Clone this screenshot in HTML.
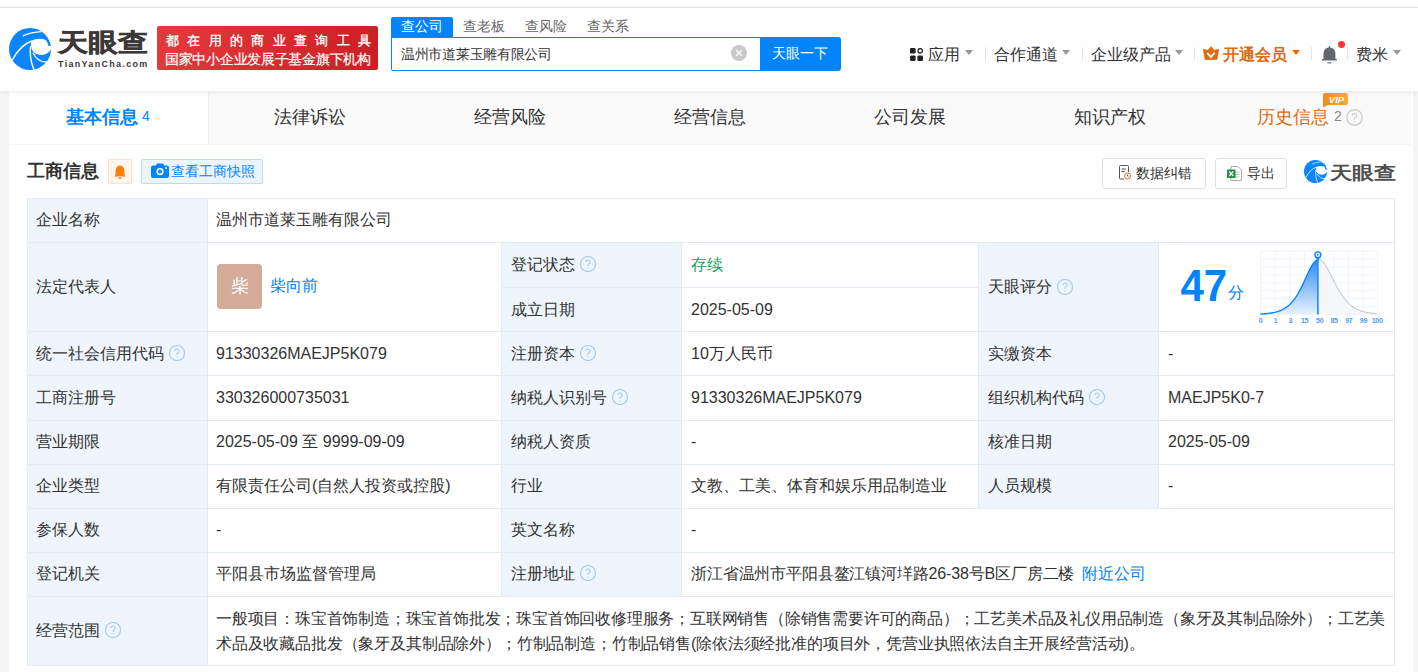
<!DOCTYPE html><html><head><meta charset="utf-8"><style>
*{margin:0;padding:0;box-sizing:border-box}
html,body{width:1418px;height:672px;overflow:hidden;background:#f5f5f5;font-family:"Liberation Sans",sans-serif;color:#333}
.a{position:absolute;white-space:nowrap}
.bx{position:absolute}
.t16{font-size:16px;line-height:20px}
.help{position:absolute;width:16px;height:16px}
</style></head><body>
<div class="bx" style="left:0;top:0;width:1418px;height:7px;background:#fff"></div>
<div class="bx" style="left:0;top:7px;width:1418px;height:1px;background:#e6e6e6"></div>
<div class="bx" style="left:9px;top:91px;width:1404px;height:581px;background:#fff"></div>
<div class="bx" style="left:9px;top:91px;width:1402px;height:53px;background:#fafafa"></div>
<div class="bx" style="left:9px;top:91px;width:199px;height:53px;background:#fff"></div>
<div class="bx" style="left:208px;top:91px;width:1px;height:53px;background:#f0f0f0"></div>
<div class="bx" style="left:9px;top:144px;width:1402px;height:1px;background:#f4f4f4"></div>
<div class="bx" style="left:0;top:8px;width:1418px;height:83px;background:#fff;box-shadow:0 1px 5px rgba(0,0,0,.09)"></div>
<div class="bx" style="left:9px;top:28px;width:42px;height:42px"><svg width="42" height="42" viewBox="0 0 42 42"><circle cx="21" cy="21" r="21" fill="#0a84ff"/><path d="M22.4 13 C26 10.5 33 10 36.5 12 C38.5 13.5 39 16 39 17.5 L43 18.5 L43 20 C40.5 24 37 27 33 27 C29 27 25.5 25.5 23.9 23.4 C22 21 21.5 16 22.4 13Z" fill="#fff"/><path d="M3 32.5 C8 23 14 16 22.8 13" fill="none" stroke="#fff" stroke-width="1.4"/><path d="M21.6 18 C20.5 27 22 35 25.5 43" fill="none" stroke="#fff" stroke-width="1.4"/><path d="M24 25 C27 31 32 34.5 38.5 34" fill="none" stroke="#fff" stroke-width="1.4"/><path d="M14 7.9 C20 5 26 3.8 32.5 3.6" fill="none" stroke="#fff" stroke-width="1.2"/></svg></div>
<div class="a" style="left:58px;top:28px;font-size:25px;line-height:28px;font-weight:bold;color:#3d3838;-webkit-text-stroke:0.4px #3d3838;transform:scaleX(1.2);transform-origin:0 0">天眼查</div>
<div class="a" style="left:58px;top:58px;font-size:9px;line-height:12px;font-weight:bold;color:#3d3838;letter-spacing:1.3px">TianYanCha.com</div>
<div class="bx" style="left:157px;top:26px;width:221px;height:44px;border-radius:2px;background:linear-gradient(100deg,#e4393d,#cc1f24)"></div>
<div class="a" style="left:166px;top:33px;font-size:13px;line-height:16px;color:#fff;-webkit-text-stroke:0.35px #fff;letter-spacing:8.35px">都在用的商业查询工具</div>
<div class="a" style="left:165px;top:51.5px;font-size:13.5px;line-height:16px;color:#fff;-webkit-text-stroke:0.2px #fff;letter-spacing:-0.28px">国家中小企业发展子基金旗下机构</div>
<div class="bx" style="left:391px;top:17px;width:62px;height:21px;background:#0084ff;border-radius:2px 2px 0 0"></div>
<div class="a" style="left:401px;top:16px;font-size:14px;line-height:20px;color:#fff">查公司</div>
<div class="a" style="left:463px;top:16px;font-size:14px;line-height:20px;color:#666">查老板</div>
<div class="a" style="left:525px;top:16px;font-size:14px;line-height:20px;color:#666">查风险</div>
<div class="a" style="left:587px;top:16px;font-size:14px;line-height:20px;color:#666">查关系</div>
<div class="bx" style="left:391px;top:37px;width:372px;height:34px;border:1px solid #0084ff;border-radius:0 0 0 2px;background:#fff"></div>
<div class="a" style="left:401px;top:45px;font-size:13.5px;line-height:20px;color:#333;letter-spacing:-0.3px">温州市道莱玉雕有限公司</div>
<div class="bx" style="left:731px;top:45px;width:16px;height:16px;border-radius:50%;background:#c9c9c9"><svg width="16" height="16" viewBox="0 0 16 16"><path d="M5 5L11 11M11 5L5 11" stroke="#fff" stroke-width="1.3"/></svg></div>
<div class="bx" style="left:760px;top:37px;width:81px;height:34px;background:#0084ff;border-radius:0 3px 3px 0"></div>
<div class="a" style="left:772px;top:43px;font-size:14px;line-height:20px;color:#fff">天眼一下</div>
<div class="bx" style="left:910px;top:47px;width:13px;height:13px"><svg width="13" height="13" viewBox="0 0 13 13"><rect x="0" y="0" width="5.6" height="5.6" rx="1.3" fill="#222"/><circle cx="10.2" cy="2.8" r="2.2" fill="none" stroke="#222" stroke-width="1.3"/><rect x="0" y="7.4" width="5.6" height="5.6" rx="1.3" fill="#222"/><rect x="7.4" y="7.4" width="5.6" height="5.6" rx="1.3" fill="#222"/></svg></div>
<div class="a" style="left:928px;top:45px;font-size:16px;line-height:20px;color:#333">应用</div>
<div class="bx" style="left:965px;top:50px;width:0;height:0;border-left:4.5px solid transparent;border-right:4.5px solid transparent;border-top:5px solid #999"></div>
<div class="bx" style="left:985px;top:47px;width:1px;height:13px;background:#dde3ea"></div>
<div class="a" style="left:994px;top:45px;font-size:16px;line-height:20px;color:#333">合作通道</div>
<div class="bx" style="left:1062px;top:50px;width:0;height:0;border-left:4.5px solid transparent;border-right:4.5px solid transparent;border-top:5px solid #999"></div>
<div class="bx" style="left:1082px;top:47px;width:1px;height:13px;background:#dde3ea"></div>
<div class="a" style="left:1091px;top:45px;font-size:16px;line-height:20px;color:#333">企业级产品</div>
<div class="bx" style="left:1175px;top:50px;width:0;height:0;border-left:4.5px solid transparent;border-right:4.5px solid transparent;border-top:5px solid #999"></div>
<div class="bx" style="left:1194px;top:47px;width:1px;height:13px;background:#dde3ea"></div>
<div class="bx" style="left:1203px;top:46px;width:16px;height:14px"><svg width="16" height="14" viewBox="0 0 16 14"><path d="M0.2 3.3 L4.9 4.2 L8 0.5 L11.3 4.2 L15.8 3.3 L14 13.7 L2.1 13.7Z" fill="#dd6b0f" stroke="#dd6b0f" stroke-width=".6" stroke-linejoin="round"/><path d="M4.3 6.9 L7.9 11.2 L11.5 6.9" fill="none" stroke="#fff" stroke-width="1.8"/></svg></div>
<div class="a" style="left:1223px;top:45px;font-size:16px;line-height:20px;color:#dd6b0f;font-weight:bold">开通会员</div>
<div class="bx" style="left:1292px;top:50px;width:0;height:0;border-left:4.5px solid transparent;border-right:4.5px solid transparent;border-top:5px solid #dd6b0f"></div>
<div class="bx" style="left:1311px;top:47px;width:1px;height:13px;background:#dde3ea"></div>
<div class="bx" style="left:1321px;top:45px;width:17px;height:20px"><svg width="17" height="20" viewBox="0 0 17 20"><rect x="7.9" y="1" width="1.1" height="2.5" fill="#62666d"/><path d="M2.5 14.2 L2.5 9 C2.5 5 5 2.6 8.45 2.6 C11.9 2.6 14.4 5 14.4 9 L14.4 14.2Z" fill="#62666d"/><rect x="0.9" y="14" width="15" height="1.6" rx=".5" fill="#62666d"/><rect x="6.2" y="17.1" width="4.5" height="1.5" rx=".5" fill="#8a8d93"/></svg></div>
<div class="bx" style="left:1338px;top:41px;width:7px;height:7px;border-radius:50%;background:#f73535"></div>
<div class="bx" style="left:1347px;top:47px;width:1px;height:13px;background:#dde3ea"></div>
<div class="a" style="left:1356px;top:45px;font-size:16px;line-height:20px;color:#333">费米</div>
<div class="bx" style="left:1393px;top:50px;width:0;height:0;border-left:4.5px solid transparent;border-right:4.5px solid transparent;border-top:5px solid #999"></div>
<div class="a" style="left:66px;top:107px;font-size:18px;line-height:20px;color:#0084ff;font-weight:bold">基本信息</div>
<div class="a" style="left:142px;top:106px;font-size:14px;line-height:20px;color:#0084ff">4</div>
<div class="a" style="left:273.5px;top:107px;font-size:18px;line-height:20px;color:#333">法律诉讼</div>
<div class="a" style="left:473.7px;top:107px;font-size:18px;line-height:20px;color:#333">经营风险</div>
<div class="a" style="left:673.9px;top:107px;font-size:18px;line-height:20px;color:#333">经营信息</div>
<div class="a" style="left:874.1px;top:107px;font-size:18px;line-height:20px;color:#333">公司发展</div>
<div class="a" style="left:1074.3px;top:107px;font-size:18px;line-height:20px;color:#333">知识产权</div>
<div class="a" style="left:1257px;top:107px;font-size:18px;line-height:20px;color:#dd6b0f">历史信息</div>
<div class="a" style="left:1334px;top:106px;font-size:14px;line-height:20px;color:#888">2</div>
<div class="bx" style="left:1346px;top:109px;width:17px;height:17px"><svg width="17" height="17" viewBox="0 0 17 17"><circle cx="8.5" cy="8.5" r="7.8" fill="none" stroke="#c8c8c8" stroke-width="1.2"/><path d="M6.3 6.5a2.2 2.2 0 1 1 3.2 2c-.7.3-1 .8-1 1.4v.7" fill="none" stroke="#c8c8c8" stroke-width="1.1"/><circle cx="8.5" cy="12.4" r=".7" fill="#c8c8c8"/></svg></div>
<div class="bx" style="left:1323px;top:93px;width:25px;height:14px"><svg width="25" height="14" viewBox="0 0 25 14"><defs><linearGradient id="vg" x1="0" x2="1"><stop offset="0" stop-color="#f08a1c"/><stop offset="1" stop-color="#ffa733"/></linearGradient></defs><path d="M2 0 H23 A2 2 0 0 1 25 2 V10 A2 2 0 0 1 23 12 H5 L0 14.5 V2 A2 2 0 0 1 2 0Z" fill="url(#vg)"/><text x="13.5" y="9.6" font-family="Liberation Sans" font-size="9.5" font-weight="bold" font-style="italic" fill="#fff" text-anchor="middle">VIP</text></svg></div>
<div class="a" style="left:27px;top:161px;font-size:18px;line-height:20px;color:#333;font-weight:bold">工商信息</div>
<div class="bx" style="left:108px;top:159px;width:24px;height:25px;background:#fff5eb;border:1px solid #ffe2c7;border-radius:2px"><svg width="22" height="23" viewBox="0 0 22 23"><path d="M11 5.5 C7.5 6 6.5 9 6.5 12 L6.5 15 L5 16.5 L17 16.5 L15.5 15 L15.5 12 C15.5 9 14.5 6 11 5.5Z" fill="#ff7d0a"/><rect x="9.5" y="17.3" width="3" height="1.5" rx=".7" fill="#ff7d0a"/></svg></div>
<div class="bx" style="left:141px;top:159px;width:122px;height:25px;background:#ebf4ff;border:1px solid #bcdaff;border-radius:2px"></div>
<div class="bx" style="left:151px;top:163px;width:18px;height:15px"><svg width="18" height="15" viewBox="0 0 18 15"><path d="M6 0.5 H12 L13.2 2.5 H16 A2 2 0 0 1 18 4.5 V13 A2 2 0 0 1 16 15 H2 A2 2 0 0 1 0 13 V4.5 A2 2 0 0 1 2 2.5 H4.8Z" fill="#0084ff"/><circle cx="9" cy="8.6" r="3.6" fill="#fff"/><circle cx="9" cy="8.6" r="2" fill="#0084ff"/><circle cx="15" cy="5" r=".9" fill="#fff"/></svg></div>
<div class="a" style="left:171px;top:161px;font-size:14px;line-height:20px;color:#0084ff">查看工商快照</div>
<div class="bx" style="left:1102px;top:158px;width:104px;height:31px;background:#fff;border:1px solid #dfdfdf;border-radius:3px"></div>
<div class="bx" style="left:1119px;top:165px;width:12px;height:15px"><svg width="12" height="15" viewBox="0 0 12 15"><path d="M9.5 7 V1.5 A1 1 0 0 0 8.5 .5 H1.5 A1 1 0 0 0 .5 1.5 V13 A1 1 0 0 0 1.5 14 H5" fill="none" stroke="#555" stroke-width="1"/><path d="M2.5 4 H7 M2.5 6.5 H5.5" stroke="#555" stroke-width="1"/><circle cx="8.5" cy="11" r="3" fill="#fff" stroke="#e07020" stroke-width="1"/><path d="M8.5 9.5 V11 L9.5 11.8" fill="none" stroke="#555" stroke-width=".9"/></svg></div>
<div class="a" style="left:1136px;top:163px;font-size:14px;line-height:20px;color:#333">数据纠错</div>
<div class="bx" style="left:1215px;top:158px;width:72px;height:31px;background:#fff;border:1px solid #dfdfdf;border-radius:3px"></div>
<div class="bx" style="left:1227px;top:166px;width:15px;height:15px"><svg width="15" height="15" viewBox="0 0 15 15"><path d="M4 .5 H11 L14.5 4 V14.5 H4Z" fill="#fff" stroke="#aaa" stroke-width="1"/><path d="M8 6 H12.5 M8 8.5 H12.5 M8 11 H12.5" stroke="#bbb" stroke-width="1"/><rect x="0" y="3.5" width="8.5" height="8.5" fill="#1d8f4a"/><path d="M2.2 5.5 L6.3 10 M6.3 5.5 L2.2 10" stroke="#fff" stroke-width="1.2"/></svg></div>
<div class="a" style="left:1247px;top:163px;font-size:14px;line-height:20px;color:#333">导出</div>
<div class="bx" style="left:1304px;top:160px;width:23px;height:23px"><svg width="23" height="23" viewBox="0 0 42 42"><circle cx="21" cy="21" r="21" fill="#0a84ff"/><path d="M22.4 13 C26 10.5 33 10 36.5 12 C38.5 13.5 39 16 39 17.5 L43 18.5 L43 20 C40.5 24 37 27 33 27 C29 27 25.5 25.5 23.9 23.4 C22 21 21.5 16 22.4 13Z" fill="#fff"/><path d="M3 32.5 C8 23 14 16 22.8 13" fill="none" stroke="#fff" stroke-width="1.4"/><path d="M21.6 18 C20.5 27 22 35 25.5 43" fill="none" stroke="#fff" stroke-width="1.4"/><path d="M24 25 C27 31 32 34.5 38.5 34" fill="none" stroke="#fff" stroke-width="1.4"/><path d="M14 7.9 C20 5 26 3.8 32.5 3.6" fill="none" stroke="#fff" stroke-width="1.2"/></svg></div>
<div class="a" style="left:1330px;top:162.5px;font-size:18px;line-height:20px;font-weight:bold;color:#505050;transform:scaleX(1.23);transform-origin:0 0">天眼查</div>
<div class="bx" style="left:27px;top:198px;width:1368px;height:468px;background:#fff;border:1px solid #e3ebf5"></div>
<div class="bx" style="left:28px;top:199px;width:179px;height:466px;background:#eff5fc"></div>
<div class="bx" style="left:502px;top:243px;width:179px;height:353px;background:#eff5fc"></div>
<div class="bx" style="left:979px;top:243px;width:179px;height:265px;background:#eff5fc"></div>
<div class="bx" style="left:28px;top:242px;width:1366px;height:1px;background:#e3ebf5"></div>
<div class="bx" style="left:28px;top:331px;width:1366px;height:1px;background:#e3ebf5"></div>
<div class="bx" style="left:28px;top:375px;width:1366px;height:1px;background:#e3ebf5"></div>
<div class="bx" style="left:28px;top:420px;width:1366px;height:1px;background:#e3ebf5"></div>
<div class="bx" style="left:28px;top:464px;width:1366px;height:1px;background:#e3ebf5"></div>
<div class="bx" style="left:28px;top:508px;width:1366px;height:1px;background:#e3ebf5"></div>
<div class="bx" style="left:28px;top:552px;width:1366px;height:1px;background:#e3ebf5"></div>
<div class="bx" style="left:28px;top:596px;width:1366px;height:1px;background:#e3ebf5"></div>
<div class="bx" style="left:501px;top:287px;width:477px;height:1px;background:#e3ebf5"></div>
<div class="bx" style="left:207px;top:199px;width:1px;height:466px;background:#e3ebf5"></div>
<div class="bx" style="left:501px;top:243px;width:1px;height:353px;background:#e3ebf5"></div>
<div class="bx" style="left:681px;top:243px;width:1px;height:353px;background:#e3ebf5"></div>
<div class="bx" style="left:978px;top:243px;width:1px;height:265px;background:#e3ebf5"></div>
<div class="bx" style="left:1158px;top:243px;width:1px;height:265px;background:#e3ebf5"></div>
<div class="a t16" style="left:36px;top:210px;">企业名称</div>
<div class="a t16" style="left:216px;top:210px;">温州市道莱玉雕有限公司</div>
<div class="a t16" style="left:36px;top:277px;">法定代表人</div>
<div class="a" style="left:217px;top:264px;width:45px;height:45px;border-radius:4px;background:#d3ab98;color:#fff;font-size:18px;line-height:45px;text-align:center">柴</div>
<div class="a t16" style="left:270px;top:276px;color:#0084ff">柴向前</div>
<div class="a t16" style="left:511px;top:255px;">登记状态</div>
<div class="help" style="left:580px;top:256px"><svg width="16" height="16" viewBox="0 0 16 16"><circle cx="8" cy="8" r="7.5" fill="none" stroke="#a3caf0" stroke-width="1.15"/><path d="M5.9 6.1a2.1 2.1 0 1 1 3 1.9c-.6.3-.9.7-.9 1.3v.6" fill="none" stroke="#a3caf0" stroke-width="1.1"/><circle cx="8" cy="11.6" r=".6" fill="#a9cdf0"/></svg></div>
<div class="a t16" style="left:691px;top:255px;color:#1aa260">存续</div>
<div class="a t16" style="left:511px;top:300px;">成立日期</div>
<div class="a t16" style="left:691px;top:300px;">2025-05-09</div>
<div class="a t16" style="left:988px;top:277px;">天眼评分</div>
<div class="help" style="left:1057px;top:279px"><svg width="16" height="16" viewBox="0 0 16 16"><circle cx="8" cy="8" r="7.5" fill="none" stroke="#a3caf0" stroke-width="1.15"/><path d="M5.9 6.1a2.1 2.1 0 1 1 3 1.9c-.6.3-.9.7-.9 1.3v.6" fill="none" stroke="#a3caf0" stroke-width="1.1"/><circle cx="8" cy="11.6" r=".6" fill="#a9cdf0"/></svg></div>
<div class="a t16" style="left:36px;top:344px;">统一社会信用代码</div>
<div class="a t16" style="left:216px;top:344px;">91330326MAEJP5K079</div>
<div class="a t16" style="left:511px;top:344px;">注册资本</div>
<div class="a t16" style="left:691px;top:344px;">10万人民币</div>
<div class="a t16" style="left:988px;top:344px;">实缴资本</div>
<div class="a t16" style="left:1168px;top:344px;">-</div>
<div class="help" style="left:168.5px;top:345px"><svg width="16" height="16" viewBox="0 0 16 16"><circle cx="8" cy="8" r="7.5" fill="none" stroke="#a3caf0" stroke-width="1.15"/><path d="M5.9 6.1a2.1 2.1 0 1 1 3 1.9c-.6.3-.9.7-.9 1.3v.6" fill="none" stroke="#a3caf0" stroke-width="1.1"/><circle cx="8" cy="11.6" r=".6" fill="#a9cdf0"/></svg></div>
<div class="help" style="left:580px;top:345px"><svg width="16" height="16" viewBox="0 0 16 16"><circle cx="8" cy="8" r="7.5" fill="none" stroke="#a3caf0" stroke-width="1.15"/><path d="M5.9 6.1a2.1 2.1 0 1 1 3 1.9c-.6.3-.9.7-.9 1.3v.6" fill="none" stroke="#a3caf0" stroke-width="1.1"/><circle cx="8" cy="11.6" r=".6" fill="#a9cdf0"/></svg></div>
<div class="a t16" style="left:36px;top:388px;">工商注册号</div>
<div class="a t16" style="left:216px;top:388px;">330326000735031</div>
<div class="a t16" style="left:511px;top:388px;">纳税人识别号</div>
<div class="a t16" style="left:691px;top:388px;">91330326MAEJP5K079</div>
<div class="a t16" style="left:988px;top:388px;">组织机构代码</div>
<div class="a t16" style="left:1168px;top:388px;">MAEJP5K0-7</div>
<div class="help" style="left:612px;top:389px"><svg width="16" height="16" viewBox="0 0 16 16"><circle cx="8" cy="8" r="7.5" fill="none" stroke="#a3caf0" stroke-width="1.15"/><path d="M5.9 6.1a2.1 2.1 0 1 1 3 1.9c-.6.3-.9.7-.9 1.3v.6" fill="none" stroke="#a3caf0" stroke-width="1.1"/><circle cx="8" cy="11.6" r=".6" fill="#a9cdf0"/></svg></div>
<div class="help" style="left:1089px;top:389px"><svg width="16" height="16" viewBox="0 0 16 16"><circle cx="8" cy="8" r="7.5" fill="none" stroke="#a3caf0" stroke-width="1.15"/><path d="M5.9 6.1a2.1 2.1 0 1 1 3 1.9c-.6.3-.9.7-.9 1.3v.6" fill="none" stroke="#a3caf0" stroke-width="1.1"/><circle cx="8" cy="11.6" r=".6" fill="#a9cdf0"/></svg></div>
<div class="a t16" style="left:36px;top:432px;">营业期限</div>
<div class="a t16" style="left:216px;top:432px;">2025-05-09 至 9999-09-09</div>
<div class="a t16" style="left:511px;top:432px;">纳税人资质</div>
<div class="a t16" style="left:691px;top:432px;">-</div>
<div class="a t16" style="left:988px;top:432px;">核准日期</div>
<div class="a t16" style="left:1168px;top:432px;">2025-05-09</div>
<div class="a t16" style="left:36px;top:476px;">企业类型</div>
<div class="a t16" style="left:216px;top:476px;">有限责任公司(自然人投资或控股)</div>
<div class="a t16" style="left:511px;top:476px;">行业</div>
<div class="a t16" style="left:691px;top:476px;">文教、工美、体育和娱乐用品制造业</div>
<div class="a t16" style="left:988px;top:476px;">人员规模</div>
<div class="a t16" style="left:1168px;top:476px;">-</div>
<div class="a t16" style="left:36px;top:520px;">参保人数</div>
<div class="a t16" style="left:216px;top:520px;">-</div>
<div class="a t16" style="left:511px;top:520px;">英文名称</div>
<div class="a t16" style="left:691px;top:520px;">-</div>
<div class="a t16" style="left:36px;top:564px;">登记机关</div>
<div class="a t16" style="left:216px;top:564px;">平阳县市场监督管理局</div>
<div class="a t16" style="left:511px;top:564px;">注册地址</div>
<div class="help" style="left:580px;top:565px"><svg width="16" height="16" viewBox="0 0 16 16"><circle cx="8" cy="8" r="7.5" fill="none" stroke="#a3caf0" stroke-width="1.15"/><path d="M5.9 6.1a2.1 2.1 0 1 1 3 1.9c-.6.3-.9.7-.9 1.3v.6" fill="none" stroke="#a3caf0" stroke-width="1.1"/><circle cx="8" cy="11.6" r=".6" fill="#a9cdf0"/></svg></div>
<div class="a t16" style="left:691px;top:564px;"><span style="letter-spacing:-0.16px">浙江省温州市平阳县鳌江镇河垟路26-38号B区厂房二楼</span></div>
<div class="a t16" style="left:1082px;top:564px;color:#0084ff">附近公司</div>
<div class="a t16" style="left:36px;top:621px;">经营范围</div>
<div class="help" style="left:105px;top:622px"><svg width="16" height="16" viewBox="0 0 16 16"><circle cx="8" cy="8" r="7.5" fill="none" stroke="#a3caf0" stroke-width="1.15"/><path d="M5.9 6.1a2.1 2.1 0 1 1 3 1.9c-.6.3-.9.7-.9 1.3v.6" fill="none" stroke="#a3caf0" stroke-width="1.1"/><circle cx="8" cy="11.6" r=".6" fill="#a9cdf0"/></svg></div>
<div class="a" style="left:216px;top:606px;font-size:16px;line-height:25px"><span style="letter-spacing:-0.2px">一般项目：珠宝首饰制造；珠宝首饰批发；珠宝首饰回收修理服务；互联网销售（除销售需要许可的商品）；工艺美术品及礼仪用品制造（象牙及其制品除外）；工艺美</span><br><span style="letter-spacing:-0.17px">术品及收藏品批发（象牙及其制品除外）；竹制品制造；竹制品销售(除依法须经批准的项目外，凭营业执照依法自主开展经营活动)。</span></div>
<div class="a" style="left:1180.5px;top:263px;font-size:42px;line-height:46px;color:#0084ff;font-weight:bold;transform:scaleY(1.07);transform-origin:0 50%">47</div>
<div class="a" style="left:1228px;top:283px;font-size:16px;line-height:20px;color:#0084ff">分</div>
<div class="bx" style="left:1255px;top:245px;width:130px;height:82px"><svg width="130" height="82" viewBox="0 0 130 82" style="position:absolute;left:0;top:0"><defs><linearGradient id="bf" x1="0" y1="0" x2="0" y2="1"><stop offset="0" stop-color="#2b8af7"/><stop offset="1" stop-color="#e9f3fe"/></linearGradient></defs><line x1="5.50" y1="6.10" x2="5.50" y2="69.60" stroke="#eef4fb" stroke-width="1"/><line x1="20.15" y1="6.10" x2="20.15" y2="69.60" stroke="#eef4fb" stroke-width="1"/><line x1="34.80" y1="6.10" x2="34.80" y2="69.60" stroke="#eef4fb" stroke-width="1"/><line x1="49.45" y1="6.10" x2="49.45" y2="69.60" stroke="#eef4fb" stroke-width="1"/><line x1="64.10" y1="6.10" x2="64.10" y2="69.60" stroke="#eef4fb" stroke-width="1"/><line x1="78.75" y1="6.10" x2="78.75" y2="69.60" stroke="#eef4fb" stroke-width="1"/><line x1="93.40" y1="6.10" x2="93.40" y2="69.60" stroke="#eef4fb" stroke-width="1"/><line x1="108.05" y1="6.10" x2="108.05" y2="69.60" stroke="#eef4fb" stroke-width="1"/><line x1="122.70" y1="6.10" x2="122.70" y2="69.60" stroke="#eef4fb" stroke-width="1"/><line x1="5.50" y1="6.10" x2="122.70" y2="6.10" stroke="#eef4fb" stroke-width="1"/><line x1="5.50" y1="14.04" x2="122.70" y2="14.04" stroke="#eef4fb" stroke-width="1"/><line x1="5.50" y1="21.98" x2="122.70" y2="21.98" stroke="#eef4fb" stroke-width="1"/><line x1="5.50" y1="29.91" x2="122.70" y2="29.91" stroke="#eef4fb" stroke-width="1"/><line x1="5.50" y1="37.85" x2="122.70" y2="37.85" stroke="#eef4fb" stroke-width="1"/><line x1="5.50" y1="45.79" x2="122.70" y2="45.79" stroke="#eef4fb" stroke-width="1"/><line x1="5.50" y1="53.73" x2="122.70" y2="53.73" stroke="#eef4fb" stroke-width="1"/><line x1="5.50" y1="61.66" x2="122.70" y2="61.66" stroke="#eef4fb" stroke-width="1"/><line x1="5.50" y1="69.60" x2="122.70" y2="69.60" stroke="#eef4fb" stroke-width="1"/><path d="M5.50 69.06 L6.50 69.01 L7.50 68.94 L8.50 68.87 L9.50 68.79 L10.50 68.70 L11.50 68.61 L12.50 68.50 L13.50 68.38 L14.50 68.25 L15.50 68.10 L16.50 67.94 L17.50 67.76 L18.50 67.57 L19.50 67.35 L20.50 67.11 L21.50 66.84 L22.50 66.55 L23.50 66.23 L24.50 65.87 L25.50 65.48 L26.50 65.05 L27.50 64.58 L28.50 64.06 L29.50 63.49 L30.50 62.86 L31.50 62.18 L32.50 61.43 L33.50 60.61 L34.50 59.73 L35.50 58.76 L36.50 57.71 L37.50 56.58 L38.50 55.35 L39.50 54.04 L40.50 52.62 L41.50 51.11 L42.50 49.50 L43.50 47.79 L44.50 45.99 L45.50 44.10 L46.50 42.13 L47.50 40.08 L48.50 37.97 L49.50 35.82 L50.50 33.64 L51.50 31.45 L52.50 29.28 L53.50 27.15 L54.50 25.10 L55.50 23.15 L56.50 21.33 L57.50 19.68 L58.50 18.23 L59.50 16.99 L60.50 16.01 L61.50 15.29 L62.50 14.85 L62.90 69.60 L5.50 69.60Z" fill="url(#bf)"/><path d="M62.90 14.75 L63.90 14.72 L64.90 14.94 L65.90 15.41 L66.90 16.11 L67.90 17.04 L68.90 18.18 L69.90 19.50 L70.90 20.99 L71.90 22.63 L72.90 24.38 L73.90 26.23 L74.90 28.16 L75.90 30.14 L76.90 32.14 L77.90 34.15 L78.90 36.15 L79.90 38.13 L80.90 40.06 L81.90 41.95 L82.90 43.77 L83.90 45.53 L84.90 47.21 L85.90 48.81 L86.90 50.33 L87.90 51.76 L88.90 53.12 L89.90 54.39 L90.90 55.58 L91.90 56.70 L92.90 57.73 L93.90 58.70 L94.90 59.59 L95.90 60.42 L96.90 61.19 L97.90 61.90 L98.90 62.55 L99.90 63.15 L100.90 63.71 L101.90 64.21 L102.90 64.68 L103.90 65.11 L104.90 65.50 L105.90 65.86 L106.90 66.19 L107.90 66.49 L108.90 66.77 L109.90 67.02 L110.90 67.25 L111.90 67.46 L112.90 67.65 L113.90 67.82 L114.90 67.98 L115.90 68.13 L116.90 68.26 L117.90 68.38 L118.90 68.49 L119.90 68.59 L120.90 68.68 L121.90 68.76 L62.90 69.60Z" fill="#f6f7fa"/><path d="M62.90 14.75 L63.90 14.72 L64.90 14.94 L65.90 15.41 L66.90 16.11 L67.90 17.04 L68.90 18.18 L69.90 19.50 L70.90 20.99 L71.90 22.63 L72.90 24.38 L73.90 26.23 L74.90 28.16 L75.90 30.14 L76.90 32.14 L77.90 34.15 L78.90 36.15 L79.90 38.13 L80.90 40.06 L81.90 41.95 L82.90 43.77 L83.90 45.53 L84.90 47.21 L85.90 48.81 L86.90 50.33 L87.90 51.76 L88.90 53.12 L89.90 54.39 L90.90 55.58 L91.90 56.70 L92.90 57.73 L93.90 58.70 L94.90 59.59 L95.90 60.42 L96.90 61.19 L97.90 61.90 L98.90 62.55 L99.90 63.15 L100.90 63.71 L101.90 64.21 L102.90 64.68 L103.90 65.11 L104.90 65.50 L105.90 65.86 L106.90 66.19 L107.90 66.49 L108.90 66.77 L109.90 67.02 L110.90 67.25 L111.90 67.46 L112.90 67.65 L113.90 67.82 L114.90 67.98 L115.90 68.13 L116.90 68.26 L117.90 68.38 L118.90 68.49 L119.90 68.59 L120.90 68.68 L121.90 68.76" fill="none" stroke="#c6ccd6" stroke-width="1.1"/><path d="M5.50 69.06 L6.50 69.01 L7.50 68.94 L8.50 68.87 L9.50 68.79 L10.50 68.70 L11.50 68.61 L12.50 68.50 L13.50 68.38 L14.50 68.25 L15.50 68.10 L16.50 67.94 L17.50 67.76 L18.50 67.57 L19.50 67.35 L20.50 67.11 L21.50 66.84 L22.50 66.55 L23.50 66.23 L24.50 65.87 L25.50 65.48 L26.50 65.05 L27.50 64.58 L28.50 64.06 L29.50 63.49 L30.50 62.86 L31.50 62.18 L32.50 61.43 L33.50 60.61 L34.50 59.73 L35.50 58.76 L36.50 57.71 L37.50 56.58 L38.50 55.35 L39.50 54.04 L40.50 52.62 L41.50 51.11 L42.50 49.50 L43.50 47.79 L44.50 45.99 L45.50 44.10 L46.50 42.13 L47.50 40.08 L48.50 37.97 L49.50 35.82 L50.50 33.64 L51.50 31.45 L52.50 29.28 L53.50 27.15 L54.50 25.10 L55.50 23.15 L56.50 21.33 L57.50 19.68 L58.50 18.23 L59.50 16.99 L60.50 16.01 L61.50 15.29 L62.50 14.85" fill="none" stroke="#0a84ff" stroke-width="1.4"/><line x1="62.90" y1="12.10" x2="62.90" y2="69.60" stroke="#0a84ff" stroke-width="1.5"/><path d="M59.70 11.30 L62.90 15.80 L66.10 11.30Z" fill="#0a84ff"/><circle cx="62.90" cy="9.80" r="3.6" fill="#0a84ff"/><circle cx="62.90" cy="9.80" r="2.2" fill="#fff"/><circle cx="62.90" cy="9.80" r="1" fill="#0a84ff"/><text x="5.50" y="78.40" font-family="Liberation Sans" font-size="7" font-weight="bold" fill="#4b9cf7" text-anchor="middle" letter-spacing="-0.3">0</text><text x="20.50" y="78.40" font-family="Liberation Sans" font-size="7" font-weight="bold" fill="#4b9cf7" text-anchor="middle" letter-spacing="-0.3">1</text><text x="35.40" y="78.40" font-family="Liberation Sans" font-size="7" font-weight="bold" fill="#4b9cf7" text-anchor="middle" letter-spacing="-0.3">3</text><text x="49.50" y="78.40" font-family="Liberation Sans" font-size="7" font-weight="bold" fill="#4b9cf7" text-anchor="middle" letter-spacing="-0.3">15</text><text x="64.70" y="78.40" font-family="Liberation Sans" font-size="7" font-weight="bold" fill="#4b9cf7" text-anchor="middle" letter-spacing="-0.3">50</text><text x="79.10" y="78.40" font-family="Liberation Sans" font-size="7" font-weight="bold" fill="#4b9cf7" text-anchor="middle" letter-spacing="-0.3">85</text><text x="93.80" y="78.40" font-family="Liberation Sans" font-size="7" font-weight="bold" fill="#4b9cf7" text-anchor="middle" letter-spacing="-0.3">97</text><text x="108.40" y="78.40" font-family="Liberation Sans" font-size="7" font-weight="bold" fill="#4b9cf7" text-anchor="middle" letter-spacing="-0.3">99</text><text x="122.10" y="78.40" font-family="Liberation Sans" font-size="7" font-weight="bold" fill="#4b9cf7" text-anchor="middle" letter-spacing="-0.3">100</text></svg></div>
</body></html>
